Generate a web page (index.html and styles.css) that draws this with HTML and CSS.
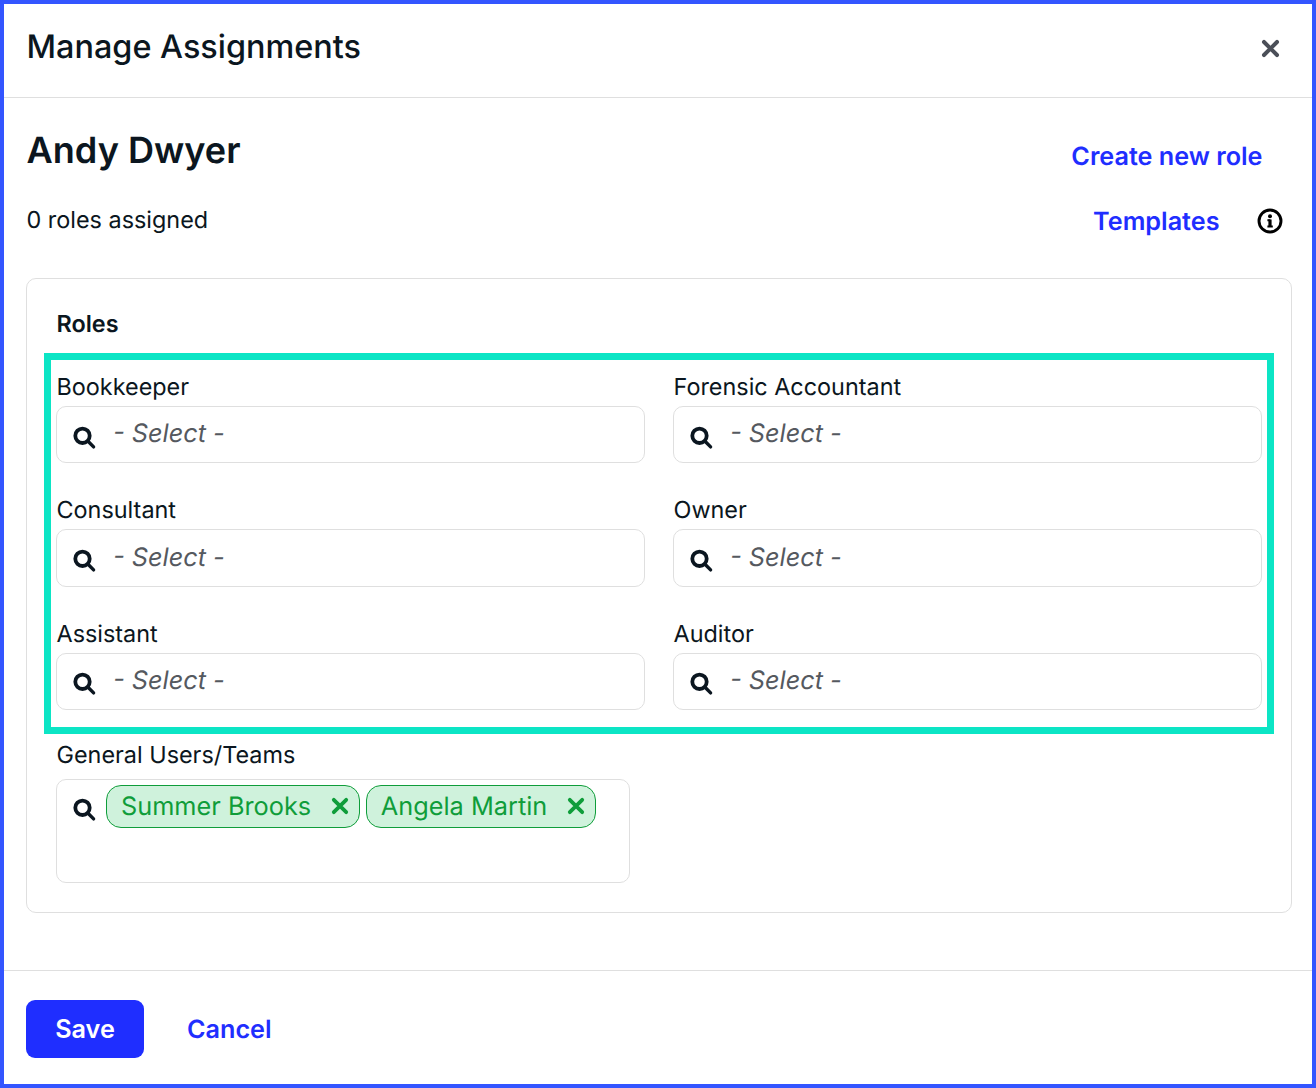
FILE: index.html
```html
<!DOCTYPE html>
<html lang="en">
<head>
<meta charset="utf-8">
<title>Manage Assignments</title>
<link rel="stylesheet" href="styles.css">
</head>
<body>
<svg class="sprite" aria-hidden="true">
  <symbol id="search" viewBox="0 0 24 24"><circle cx="9.500" cy="9.800" r="7.200" fill="none" stroke="currentColor" stroke-width="3.800"/><path d="M15 15.300l5.600 5.600" fill="none" stroke="currentColor" stroke-width="3.400" stroke-linecap="round"/></symbol>
  <symbol id="x" viewBox="0 0 20 20"><path d="M3.800 3.800l12.400 12.400M16.200 3.800l-12.400 12.400" fill="none" stroke="currentColor" stroke-width="3.800" stroke-linecap="round"/></symbol>
</svg>
<div class="modal">
  <header class="modal-header">
    <h1 class="modal-title">Manage Assignments</h1>
    <svg class="close-icon"><use href="#x"/></svg>
  </header>
  <main class="modal-body">
    <div class="summary">
      <div class="summary-left">
        <h2 class="person">Andy Dwyer</h2>
        <p class="count">0 roles assigned</p>
      </div>
      <div class="summary-right">
        <a class="link create-link">Create new role</a>
        <div class="templates-row">
          <a class="link">Templates</a>
          <svg class="info-icon" viewBox="0 0 26 26"><circle cx="13" cy="13" r="11" fill="none" stroke="currentColor" stroke-width="2.900"/><circle cx="13" cy="8.300" r="2" fill="currentColor"/><path d="M13 11.500v7" fill="none" stroke="currentColor" stroke-width="3.200"/><path d="M10.400 12.300h3M10.400 18.500h5.400" fill="none" stroke="currentColor" stroke-width="1.900"/></svg>
        </div>
      </div>
    </div>
    <section class="card">
      <div class="highlight"></div>
      <h3 class="card-title">Roles</h3>
      <div class="role-grid">
        <div class="field"><label class="field-label">Bookkeeper</label><div class="select"><svg class="search-icon"><use href="#search"/></svg><span class="placeholder">- Select -</span></div></div>
        <div class="field"><label class="field-label">Forensic Accountant</label><div class="select"><svg class="search-icon"><use href="#search"/></svg><span class="placeholder">- Select -</span></div></div>
        <div class="field"><label class="field-label">Consultant</label><div class="select"><svg class="search-icon"><use href="#search"/></svg><span class="placeholder">- Select -</span></div></div>
        <div class="field"><label class="field-label">Owner</label><div class="select"><svg class="search-icon"><use href="#search"/></svg><span class="placeholder">- Select -</span></div></div>
        <div class="field"><label class="field-label">Assistant</label><div class="select"><svg class="search-icon"><use href="#search"/></svg><span class="placeholder">- Select -</span></div></div>
        <div class="field"><label class="field-label">Auditor</label><div class="select"><svg class="search-icon"><use href="#search"/></svg><span class="placeholder">- Select -</span></div></div>
      </div>
      <div class="field general">
        <label class="field-label general-label">General Users/Teams</label>
        <div class="multi">
          <svg class="search-icon multi-icon"><use href="#search"/></svg>
          <span class="chip">Summer Brooks<svg class="chip-x"><use href="#x"/></svg></span>
          <span class="chip">Angela Martin<svg class="chip-x"><use href="#x"/></svg></span>
        </div>
      </div>
    </section>
  </main>
  <footer class="modal-footer">
    <button class="save">Save</button>
    <a class="link cancel">Cancel</a>
  </footer>
</div>
</body>
</html>
```
FILE: styles.css
```css
* { box-sizing: border-box; }
html, body { margin: 0; padding: 0; }
body { font-family: Inter, "Liberation Sans", sans-serif; color: #0b1620; background: #fff; text-rendering: geometricPrecision; }
.sprite { display: none; }
.modal { width: 1316px; height: 1088px; border: 4px solid #3355ff; display: flex; flex-direction: column; background: #fff; }
.modal-header { height: 94px; flex: none; border-bottom: 1px solid #dfdfdf; display: flex; align-items: center; justify-content: space-between; padding: 0 31px 0 22.500px; }
.modal-title { margin: 0 0 8px; font-size: 32.400px; font-weight: 500; line-height: 40px; }
.close-icon { width: 21px; height: 21px; color: #4b4f58; margin-bottom: 5px; }
.modal-body { flex: 1; padding: 0 20px 0 22px; }
.summary { display: flex; justify-content: space-between; height: 180px; }
.summary-left { padding: 30px 0 0 0.500px; }
.person { margin: 0; font-size: 36.100px; font-weight: 600; line-height: 44px; }
.count { margin: 33px 0 0; font-size: 23.400px; line-height: 30px; }
.summary-right { display: flex; flex-direction: column; align-items: flex-end; padding-top: 44px; }
.link { color: #1f2eff; font-size: 25.200px; font-weight: 600; line-height: 30px; }
.create-link { margin-right: 29.500px; }
.templates-row { display: flex; align-items: center; gap: 37px; margin-top: 35px; margin-right: 9.500px; }
.info-icon { width: 26px; height: 26px; color: #000; margin-top: -2px; }
.card { position: relative; border: 1px solid #dfdfdf; border-radius: 10px; width: 1266px; height: 635px; padding: 31px 29px 0; }
.highlight { position: absolute; left: 17px; top: 74px; width: 1230px; height: 381px; border: 7px solid #0ce5c5; pointer-events: none; }
.card-title { margin: 0 0 0 0.500px; font-size: 23.400px; font-weight: 600; line-height: 28px; }
.role-grid { display: grid; grid-template-columns: 589px 589px; column-gap: 28px; row-gap: 33px; margin-top: 35px; }
.field-label { display: block; font-size: 23.400px; line-height: 28px; margin-bottom: 5px; margin-left: 0.500px; }
.general-label { margin-bottom: 10px; }
.select { height: 57.400px; border: 1px solid #dfdfdf; border-radius: 10px; display: flex; align-items: center; padding: 0 0 0 16px; }
.search-icon { width: 24px; height: 24px; color: #0b1620; flex: none; }
.select .search-icon { margin-top: 6px; }
.placeholder { margin-left: 16px; margin-top: -2px; font-size: 25.300px; font-style: italic; color: #55595f; }
.general { margin-top: 30.800px; }
.multi { width: 574px; height: 104px; border: 1px solid #dfdfdf; border-radius: 10px; padding: 5px 0 0 16px; display: flex; align-items: flex-start; gap: 6px; }
.multi-icon { margin-top: 13px; margin-right: 3px; }
.chip { height: 43px; border: 1px solid #0f9d3a; border-radius: 15px; background: #cff2dc; color: #0f9d3a; font-size: 25.300px; display: flex; align-items: center; padding: 0 8.700px 0 14px; }
.chip-x { width: 20px; height: 20px; margin-left: 19px; }
.modal-footer { height: 114px; flex: none; border-top: 1px solid #dfdfdf; display: flex; align-items: flex-start; padding: 29px 0 0 22px; gap: 43px; }
.save { width: 118px; height: 58px; border: 0; border-radius: 9px; background: #1f2eff; color: #fff; font: 600 25.200px Inter, "Liberation Sans", sans-serif; }
.cancel { line-height: 60px; }
```
